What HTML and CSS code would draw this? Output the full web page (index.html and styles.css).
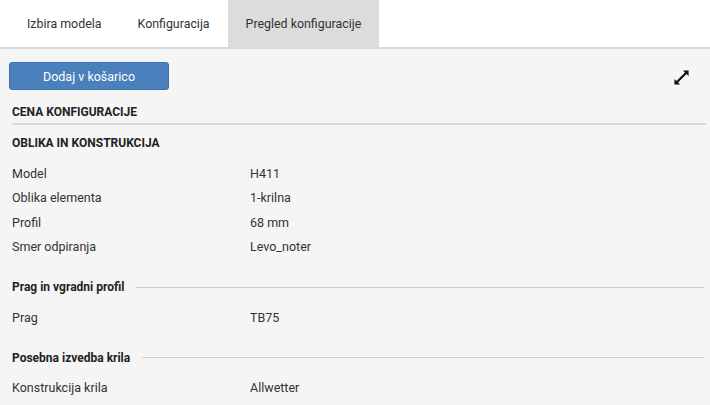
FILE: index.html
```html
<!DOCTYPE html>
<html>
<head>
<meta charset="utf-8">
<link rel="stylesheet" href="styles.css">
</head>
<body>
<nav class="tabs">
  <div class="tab">Izbira modela</div>
  <div class="tab">Konfiguracija</div>
  <div class="tab active">Pregled konfiguracije</div>
</nav>
<main class="content">
  <div class="toolbar">
    <button class="btn">Dodaj v košarico</button>
    <svg class="expand" width="17" height="17" viewBox="0 0 18 18">
      <path d="M10.5 1.5 H16.5 V7.5 L14.3 5.3 L5.3 14.3 L7.5 16.5 H1.5 V10.5 L3.7 12.7 L12.7 3.7 Z" fill="#111"/>
    </svg>
  </div>
  <h2 class="title">CENA KONFIGURACIJE</h2>
  <h3 class="title2">OBLIKA IN KONSTRUKCIJA</h3>
  <div class="rows first">
    <div class="row"><span>Model</span><span>H411</span></div>
    <div class="row"><span>Oblika elementa</span><span>1-krilna</span></div>
    <div class="row"><span>Profil</span><span>68 mm</span></div>
    <div class="row"><span>Smer odpiranja</span><span>Levo_noter</span></div>
  </div>
  <div class="group"><span class="group-name">Prag in vgradni profil</span><span class="group-line"></span></div>
  <div class="rows">
    <div class="row"><span>Prag</span><span>TB75</span></div>
  </div>
  <div class="group"><span class="group-name">Posebna izvedba krila</span><span class="group-line"></span></div>
  <div class="rows">
    <div class="row"><span>Konstrukcija krila</span><span>Allwetter</span></div>
  </div>
</main>
</body>
</html>
```
FILE: styles.css
```css
* { box-sizing: border-box; }
html, body { margin: 0; padding: 0; }
body {
  background: #f5f5f5;
  font-family: Roboto, "Liberation Sans", sans-serif;
  color: #333;
  width: 710px;
  height: 405px;
  overflow: hidden;
}
.tabs {
  display: flex;
  height: 49px;
  background: #fff;
  border-bottom: 2px solid #dadada;
  padding-left: 9px;
}
.tab {
  padding: 0 18px;
  font-size: 12.4px;
  line-height: 47px;
  color: #333;
}
.tab.active { background: #dcdcdc; }
.content { padding: 13px 4px 0 9px; }
.toolbar {
  display: flex;
  justify-content: space-between;
  align-items: center;
}
.btn {
  width: 160px;
  height: 28px;
  background: #4a80bb;
  border: 1px solid #3f72aa;
  border-radius: 3px;
  color: #fff;
  font-family: inherit;
  font-size: 12.5px;
  padding: 0;
  margin: 0;
}
.expand { margin-right: 16px; margin-top: 3px; }
.title {
  margin: 12px 0 0 3px;
  font-size: 12px;
  font-weight: bold;
  color: #222;
  line-height: 20px;
  border-bottom: 2px solid #d8d8d8;
  padding-bottom: 1px;
}
.title2 {
  margin: 8px 0 0 3px;
  font-size: 12px;
  font-weight: bold;
  color: #222;
  line-height: 20px;
}
.rows { margin: 8px 0 0 3px; }
.rows.first { margin-top: 9px; }
.row {
  display: grid;
  grid-template-columns: 238px 1fr;
  font-size: 12.5px;
  line-height: 24.3px;
  color: #333;
}
.group {
  display: flex;
  align-items: center;
  margin: 18px 0 0 3px;
  height: 20px;
}
.group + .rows { margin-top: 8.5px; }
.group-name {
  font-size: 12px;
  font-weight: bold;
  color: #222;
  padding-right: 12px;
}
.group-line {
  flex: 1;
  height: 1px;
  background: #cfcfcf;
  margin-right: 2px;
}
```
